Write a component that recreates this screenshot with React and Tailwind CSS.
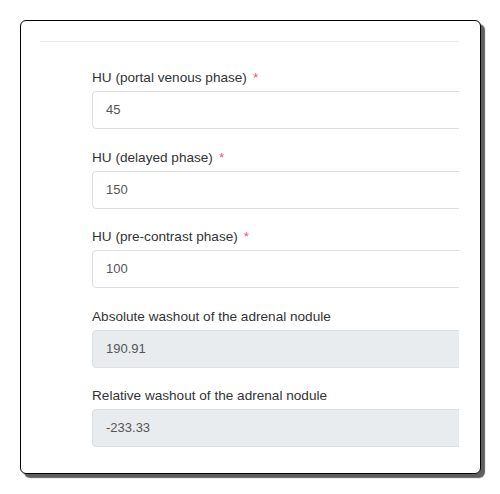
import React from 'react';

const fields = [
  { label: 'HU (portal venous phase)', value: '45', required: true },
  { label: 'HU (delayed phase)', value: '150', required: true },
  { label: 'HU (pre-contrast phase)', value: '100', required: true },
  { label: 'Absolute washout of the adrenal nodule', value: '190.91', disabled: true },
  { label: 'Relative washout of the adrenal nodule', value: '-233.33', disabled: true },
];

const Field = ({ label, value, required, disabled }) => (
  <div className="flex flex-col">
    <label className="h-[22px] text-[13.6px] leading-[17px] text-[#333]">
      {label}
      {required && <span className="ml-[6px] text-[#e0607a]">*</span>}
    </label>
    <div
      className={`h-[38px] w-[420px] shrink-0 rounded-[4px] border border-[#dcdfe3] px-[13px] text-[13px] leading-[36px] text-[#555] ${
        disabled ? 'bg-[#e9ecef]' : 'bg-white'
      }`}
    >
      {value}
    </div>
  </div>
);

export default function App() {
  return (
    <div className="min-h-[494px] bg-white pl-[20px] pt-[20px]" style={{ fontFamily: '"Liberation Sans", Arial, sans-serif' }}>
      <div className="h-[454px] w-[461px] rounded-[6px] border border-black bg-white shadow-[4px_4px_1px_rgba(40,40,40,0.75)]">
        <div className="ml-[19px] mr-[21px] overflow-hidden pt-[20px]">
          <div className="border-t border-[#ececec] pl-[52px] pt-[27px]">
            <div className="flex flex-col gap-[19.5px]">
              {fields.map((f) => (
                <Field key={f.label} {...f} />
              ))}
            </div>
          </div>
        </div>
      </div>
    </div>
  );
}
